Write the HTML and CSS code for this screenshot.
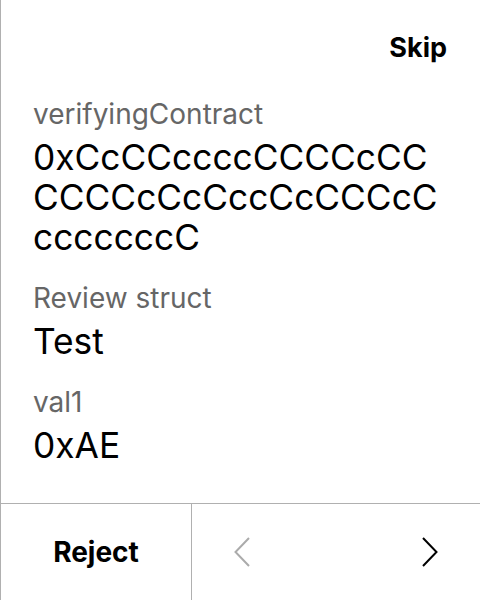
FILE: index.html
```html
<!DOCTYPE html>
<html>
<head>
<meta charset="utf-8">
<link rel="stylesheet" href="styles.css">
</head>
<body>
<div class="screen">
  <header class="top">
    <span class="skip">Skip</span>
  </header>
  <main class="content">
    <div class="entry">
      <div class="label">verifyingContract</div>
      <div class="value address">0xCcCCccccCCCCcCCCCCCcCcCccCcCCCcCcccccccC</div>
    </div>
    <div class="entry">
      <div class="label">Review struct</div>
      <div class="value">Test</div>
    </div>
    <div class="entry">
      <div class="label">val1</div>
      <div class="value">0xAE</div>
    </div>
  </main>
  <footer class="bottom">
    <div class="reject">Reject</div>
    <div class="nav">
      <svg class="chev prev" width="16" height="30" viewBox="0 0 16 30"><path d="M15 1 L1.5 15 L15 29" fill="none" stroke="currentColor" stroke-width="2"/></svg>
      <svg class="chev next" width="16" height="30" viewBox="0 0 16 30"><path d="M1 1 L14.5 15 L1 29" fill="none" stroke="currentColor" stroke-width="2"/></svg>
    </div>
  </footer>
</div>
</body>
</html>
```
FILE: styles.css
```css
html, body {
  margin: 0;
  padding: 0;
  background: #fff;
}
body {
  font-family: Inter, "Noto Sans", sans-serif;
  color: #000;
}
.screen {
  width: 480px;
  height: 600px;
  box-sizing: border-box;
  border-left: 1px solid #b0b0b0;
  display: flex;
  flex-direction: column;
}
.top {
  height: 98px;
  display: flex;
  justify-content: flex-end;
  align-items: flex-start;
  padding: 30px 33px 0 0;
  box-sizing: border-box;
}
.skip {
  font-size: 27px;
  font-weight: 700;
  line-height: 36px;
}
.content {
  flex: 1;
  padding-left: 32px;
  display: flex;
  flex-direction: column;
  gap: 24px;
}
.entry {
  display: flex;
  flex-direction: column;
  gap: 8px;
}
.label {
  font-size: 28px;
  line-height: 32px;
  color: #666;
}
.value {
  font-size: 35.3px;
  line-height: 40px;
}
.address {
  width: 414px;
  word-break: break-all;
}
.bottom {
  height: 96px;
  border-top: 1px solid #b0b0b0;
  display: grid;
  grid-template-columns: 191px 1fr;
}
.reject {
  border-right: 1px solid #b0b0b0;
  display: flex;
  align-items: center;
  justify-content: center;
  font-size: 28px;
  font-weight: 700;
}
.nav {
  display: flex;
  align-items: center;
  justify-content: space-between;
  padding: 0 42px;
}
.prev { color: #ababab; }
.next { color: #000; }
```
